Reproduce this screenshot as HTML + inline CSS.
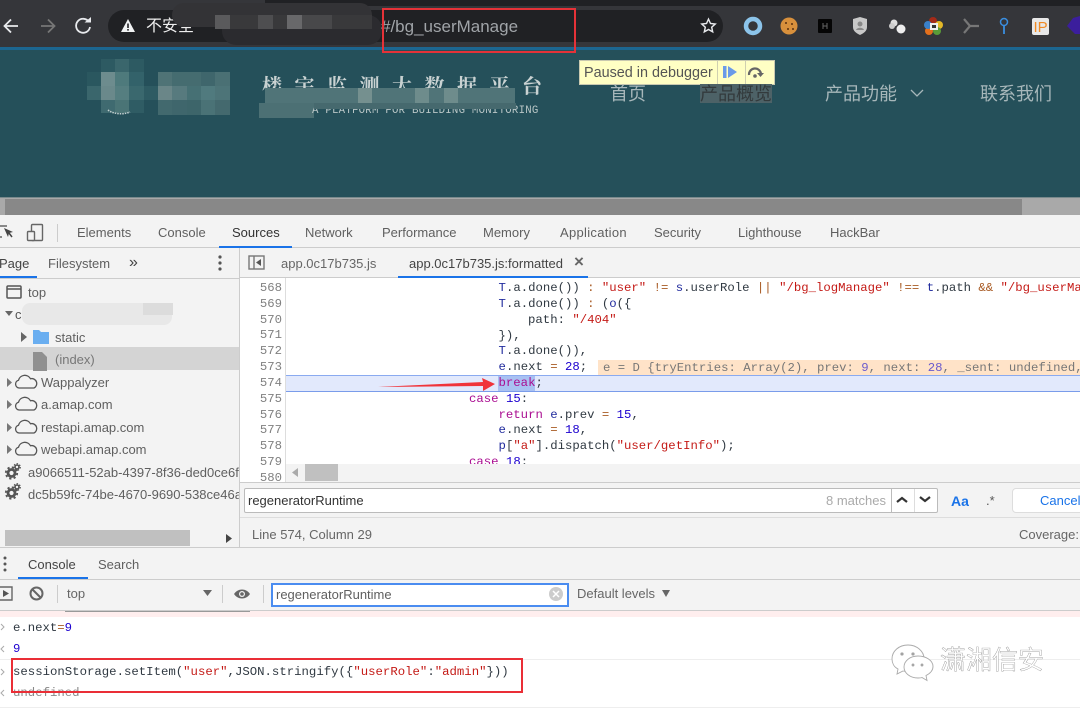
<!DOCTYPE html>
<html><head><meta charset="utf-8"><style>
html,body{margin:0;padding:0;background:#fff}
#r{position:relative;width:1080px;height:708px;overflow:hidden;background:#f3f3f3;font-family:"Liberation Sans","Noto Sans CJK SC",sans-serif;filter:blur(.35px)}
#r div,#r svg,#r span.t{position:absolute}
.t{white-space:nowrap;line-height:18px;font-size:13px;color:#5f5f5f;margin-top:1px}
.m{font-family:"Liberation Mono",monospace;font-size:12.3px;line-height:16px;white-space:pre;color:#303942}
.b{color:#222c9e}.k{color:#aa0d91}.n{color:#1c00cf}.s{color:#c41a16}.o{color:#a85a23}
.g{color:#777}
</style></head><body><div id="r">

<!-- browser chrome -->
<div style="left:0;top:0;width:1080px;height:47px;background:#35363a"></div>
<div style="left:265px;top:0;width:815px;height:6px;background:#202124"></div>
<div style="left:108px;top:10px;width:615px;height:32px;border-radius:16px;background:#202124"></div>
<div style="left:0;top:47px;width:1080px;height:3px;background:#1c6690"></div>
<svg style="left:0;top:14px" width="100" height="24" viewBox="0 0 100 24" fill="none"><path d="M18 12H5M11 5.500L4.500 12L11 18.500" stroke="#e8eaed" stroke-width="1.800"/><path d="M41 12H54M48 5.500L54.500 12L48 18.500" stroke="#777" stroke-width="1.800"/><path d="M89 8A7 7 0 1 0 90 13" stroke="#e8eaed" stroke-width="1.800"/><path d="M84.500 8.500H91V3z" fill="#e8eaed"/></svg>
<svg style="left:120px;top:18px" width="16" height="15" viewBox="0 0 16 15"><path d="M8 1L15 14H1z" fill="#f1f3f4"/><rect x="7.200" y="5.500" width="1.600" height="4.500" fill="#202124"/><rect x="7.200" y="11" width="1.600" height="1.600" fill="#202124"/></svg>
<span class="t" style="left:146px;top:17px;font-size:16px;color:#eee">不安全</span>

<!-- url smudge -->
<div style="left:172px;top:3px;width:200px;height:24px;border-radius:12px;background:#333336"></div>
<div style="left:222px;top:15px;width:160px;height:30px;border-radius:14px;background:#2b2b2f"></div>
<div style="left:215px;top:15px;width:157px;height:14px;background:#39393b"></div>
<div style="left:215px;top:15px;width:15px;height:14px;background:#5a5a5c"></div>
<div style="left:258px;top:15px;width:15px;height:14px;background:#4e4e50"></div>
<div style="left:287px;top:15px;width:15px;height:14px;background:#68686a"></div>
<div style="left:302px;top:15px;width:30px;height:14px;background:#48484a"></div>
<span class="t" style="left:381px;top:16px;font-size:17px;line-height:20px;color:#a0a4a8">#/bg_userManage</span>

<!-- star + extensions -->
<svg style="left:700px;top:17px" width="17" height="17" viewBox="0 0 24 24"><path d="M12 3l2.800 6.200 6.700.7-5 4.500 1.400 6.600L12 17.600 6.100 21l1.400-6.600-5-4.500 6.700-.7z" fill="none" stroke="#e8eaed" stroke-width="2"/></svg>
<svg style="left:742px;top:15px" width="338" height="22" viewBox="0 0 338 22">
<circle cx="11" cy="11" r="7" fill="none" stroke="#8cc4ea" stroke-width="4.500"/>
<circle cx="47" cy="11" r="8.500" fill="#d8903c"/><circle cx="44" cy="8" r="1" fill="#5a3010"/><circle cx="50" cy="9" r="1" fill="#5a3010"/><circle cx="46" cy="14" r="1" fill="#5a3010"/><circle cx="51" cy="14" r="1" fill="#5a3010"/>
<rect x="76" y="4" width="14" height="14" rx="1" fill="#050505"/><path d="M81 8v6M85 8v6M81 11h4" stroke="#666" stroke-width="1"/>
<path d="M118 2l7 2v8c0 4-3 6-7 8-4-2-7-4-7-8V4z" fill="#c8c8c8"/><circle cx="118" cy="9" r="2.500" fill="#888"/><path d="M114 15c1-3 7-3 8 0z" fill="#888"/>
<circle cx="152" cy="8" r="3.500" fill="#ddd"/><circle cx="159" cy="14" r="4.500" fill="#eee"/><circle cx="150" cy="11" r="3" fill="#ccc"/>
<circle cx="191" cy="6" r="4" fill="#a32a18"/><circle cx="197" cy="10" r="4" fill="#e4b828"/><circle cx="195" cy="16" r="4" fill="#5a9c38"/><circle cx="187" cy="16" r="4" fill="#e4701c"/><circle cx="186" cy="10" r="4" fill="#3a80c8"/><rect x="188" y="8" width="8" height="7" fill="#eee"/><rect x="190" y="10" width="4" height="3" fill="#333"/>
<path d="M222 4l6 7-6 7M228 11h9" fill="none" stroke="#777" stroke-width="2.200"/>
<circle cx="262" cy="7" r="3.500" fill="none" stroke="#3a8ee0" stroke-width="1.500"/><path d="M262 11v8" stroke="#3a8ee0" stroke-width="1.800"/>
<rect x="290" y="3" width="17" height="17" rx="2" fill="#e8e8e8"/><text x="291.500" y="17" font-family="Liberation Sans" font-size="15" fill="#f08a24">IP</text>
<path d="M331 3l7-2v18h-5l-8-8z" fill="#3b1e9c"/>
</svg>

<!-- page -->
<div style="left:0;top:50px;width:1080px;height:148px;background:#25505a"></div>
<!-- logo mosaic -->
<svg style="left:86px;top:59px" width="146" height="58" viewBox="86 59 146 58" shape-rendering="crispEdges">
<rect x="101" y="59" width="14" height="13" fill="#2d5a62"/><rect x="115" y="59" width="14" height="13" fill="#3a666c"/><rect x="129" y="59" width="15" height="13" fill="#2d5a62"/>
<rect x="87" y="72" width="14" height="14" fill="#2a575f"/><rect x="101" y="72" width="14" height="14" fill="#6d8c8e"/><rect x="115" y="72" width="14" height="14" fill="#4e7a7c"/><rect x="129" y="72" width="15" height="14" fill="#33626a"/>
<rect x="87" y="86" width="14" height="14" fill="#3a666c"/><rect x="101" y="86" width="14" height="14" fill="#6a898b"/><rect x="115" y="86" width="14" height="14" fill="#557e80"/><rect x="129" y="86" width="15" height="14" fill="#3a686e"/><rect x="144" y="86" width="14" height="14" fill="#2e5b63"/>
<rect x="101" y="100" width="14" height="13" fill="#3f6a70"/><rect x="115" y="100" width="14" height="13" fill="#4a7476"/><rect x="129" y="100" width="15" height="13" fill="#2f5c64"/>
<rect x="158" y="72" width="14" height="14" fill="#4f7376"/><rect x="172" y="72" width="15" height="14" fill="#456c70"/><rect x="187" y="72" width="14" height="14" fill="#456c70"/><rect x="201" y="72" width="14" height="14" fill="#3f666c"/><rect x="215" y="72" width="15" height="14" fill="#4a7074"/>
<rect x="158" y="86" width="14" height="14" fill="#6a8688"/><rect x="172" y="86" width="15" height="14" fill="#577a7e"/><rect x="187" y="86" width="14" height="14" fill="#467074"/><rect x="201" y="86" width="14" height="14" fill="#507a7e"/><rect x="215" y="86" width="15" height="14" fill="#4d7478"/>
<rect x="158" y="100" width="14" height="15" fill="#42696e"/><rect x="172" y="100" width="15" height="15" fill="#3f666c"/><rect x="187" y="100" width="14" height="15" fill="#3d656a"/><rect x="201" y="100" width="14" height="15" fill="#4a7276"/><rect x="215" y="100" width="15" height="15" fill="#44696e"/>
</svg>
<svg style="left:105px;top:108px" width="30" height="8"><path d="M3 2c5 4 15 5 22 2" fill="none" stroke="#c3d0d0" stroke-width="1.500" stroke-dasharray="1.500 1"/></svg>
<span class="t" style="left:262px;top:74px;font:bold 20px/24px 'Liberation Serif','Noto Serif CJK SC',serif;letter-spacing:12.500px;color:#c9d2d2">楼宇监测大数据平台</span>
<div style="left:265px;top:88px;width:250px;height:15px;background:#507478"></div>
<div style="left:358px;top:88px;width:14px;height:15px;background:#75908f"></div>
<div style="left:415px;top:88px;width:14px;height:15px;background:#6e8c8c"></div>
<div style="left:444px;top:88px;width:14px;height:15px;background:#6e8c8c"></div>
<div style="left:259px;top:103px;width:55px;height:15px;background:#4c7074"></div>
<span class="t" style="left:312px;top:103px;font:10.700px/14px 'Liberation Mono',monospace;color:#b9c6c6;letter-spacing:.25px">A PLATFORM FOR BUILDING MONITORING</span>
<div style="left:314px;top:103px;width:202px;height:6px;background:#46696e"></div>

<div style="left:579px;top:60px;width:194px;height:23px;background:#ffffc4;border:1px solid #c9c9b0"></div>
<span class="t" style="left:584px;top:63px;font-size:14.400px;color:#555">Paused in debugger</span>
<div style="left:717px;top:61px;width:1px;height:23px;background:#cfcfb0"></div>
<div style="left:745px;top:61px;width:1px;height:23px;background:#cfcfb0"></div>
<svg style="left:722px;top:64px" width="50" height="16" viewBox="0 0 50 16"><rect x="1" y="2" width="3.500" height="12" fill="#6a9ae8"/><path d="M6 2l9 6-9 6z" fill="#6a9ae8"/><path d="M27 11a6 6 0 0 1 12-1" fill="none" stroke="#666" stroke-width="2.200"/><path d="M35 9h7l-3.500 4z" fill="#666"/><circle cx="33" cy="12" r="1.800" fill="#666"/></svg>

<span class="t" style="left:610px;top:80px;font-size:18px;line-height:26px;color:#a7b7ba">首页</span>
<div style="left:700px;top:84px;width:72px;height:19px;background:#4d6267"></div>
<span class="t" style="left:700px;top:80px;font-size:18px;line-height:26px;color:#333a3c">产品概览</span>
<span class="t" style="left:825px;top:80px;font-size:18px;line-height:26px;color:#a7b7ba">产品功能</span>
<svg style="left:909px;top:87px" width="16" height="12" viewBox="0 0 16 12"><path d="M2 3l6 6 6-6" fill="none" stroke="#a7b7ba" stroke-width="1.300"/></svg>
<span class="t" style="left:980px;top:80px;font-size:18px;line-height:26px;color:#a7b7ba">联系我们</span>

<!-- red url box -->
<div style="left:382px;top:8px;width:190px;height:41px;border:2px solid #e53238"></div>

<div style="left:0;top:197px;width:1080px;height:1px;background:#78898c"></div>
<div style="left:0;top:198px;width:1080px;height:17px;background:#a9a9a9"></div>
<div style="left:5px;top:199px;width:1017px;height:16px;background:#888"></div>

<!-- devtools top tabs -->
<div style="left:0;top:215px;width:1080px;height:333px;background:#f3f3f3"></div>
<div style="left:0;top:247px;width:1080px;height:1px;background:#ccc"></div>
<svg style="left:0;top:222px" width="46" height="22" viewBox="0 0 46 22" fill="none"><path d="M0 4h7M0 15h2" stroke="#666" stroke-width="1.500"/><path d="M4 6l9 4-4 1-1 4z" fill="#444"/><path d="M9 11l3 4" stroke="#444" stroke-width="1.500"/><rect x="31.500" y="2.500" width="11" height="16" rx="1" stroke="#666" stroke-width="1.400"/><rect x="27.500" y="9.500" width="7" height="9" rx="1" fill="#f3f3f3" stroke="#666" stroke-width="1.400"/></svg>
<div style="left:57px;top:224px;width:1px;height:18px;background:#ccc"></div>
<span class="t" style="left:77px;top:223px">Elements</span>
<span class="t" style="left:158px;top:223px">Console</span>
<span class="t" style="left:232px;top:223px;color:#333">Sources</span>
<span class="t" style="left:305px;top:223px">Network</span>
<span class="t" style="left:382px;top:223px">Performance</span>
<span class="t" style="left:483px;top:223px">Memory</span>
<span class="t" style="left:560px;top:223px;letter-spacing:.3px">Application</span>
<span class="t" style="left:654px;top:223px">Security</span>
<span class="t" style="left:738px;top:223px">Lighthouse</span>
<span class="t" style="left:830px;top:223px">HackBar</span>
<div style="left:219px;top:246px;width:73px;height:2px;background:#1a73e8"></div>

<!-- left panel -->
<div style="left:239px;top:248px;width:1px;height:300px;background:#ccc"></div>
<div style="left:0;top:278px;width:239px;height:1px;background:#ccc"></div>
<span class="t" style="left:-1px;top:254px;color:#444">Page</span>
<span class="t" style="left:48px;top:254px">Filesystem</span>
<span class="t" style="left:129px;top:253px;font-size:16px;color:#444">»</span>
<div style="left:0;top:276px;width:37px;height:2px;background:#1a73e8"></div>
<svg style="left:217px;top:254px" width="6" height="18"><circle cx="3" cy="3" r="1.600" fill="#555"/><circle cx="3" cy="9" r="1.600" fill="#555"/><circle cx="3" cy="15" r="1.600" fill="#555"/></svg>
<div style="left:0;top:347px;width:239px;height:23px;background:#d4d4d4"></div>
<svg style="left:0;top:284px" width="60" height="90" viewBox="0 0 60 90" fill="none">
<rect x="7" y="2" width="14" height="12" rx="1" stroke="#555" stroke-width="1.500"/><path d="M7 5h14" stroke="#555" stroke-width="1.500"/>
<path d="M5 27h8l-4 5z" fill="#666"/><path d="M21 48v10l6-5z" fill="#666"/>
<path d="M33 46h6l2 2h8v12H33z" fill="#6aaef0"/>
<path d="M33 68h9l5 5v14H33z" fill="#909090"/>
</svg>
<svg style="left:0;top:360px" width="40" height="146" viewBox="0 0 40 146" fill="none" stroke="#555" stroke-width="1.300">
<g><path d="M7 18v9l5-4.500z" fill="#777" stroke="none"/><path d="M21 28h-2a4 4 0 0 1-.5-7.800 6.500 6.500 0 0 1 12-1.500 5 5 0 0 1 3.500 9.300z"/></g>
<g transform="translate(0 22)"><path d="M7 18v9l5-4.500z" fill="#777" stroke="none"/><path d="M21 28h-2a4 4 0 0 1-.5-7.800 6.500 6.500 0 0 1 12-1.500 5 5 0 0 1 3.500 9.300z"/></g>
<g transform="translate(0 45)"><path d="M7 18v9l5-4.500z" fill="#777" stroke="none"/><path d="M21 28h-2a4 4 0 0 1-.5-7.800 6.500 6.500 0 0 1 12-1.500 5 5 0 0 1 3.500 9.300z"/></g>
<g transform="translate(0 67)"><path d="M7 18v9l5-4.500z" fill="#777" stroke="none"/><path d="M21 28h-2a4 4 0 0 1-.5-7.800 6.500 6.500 0 0 1 12-1.500 5 5 0 0 1 3.500 9.300z"/></g>
<g stroke="#555">
<circle cx="11.500" cy="113" r="3.500" stroke-width="2.800"/><circle cx="11.500" cy="113" r="5.700" stroke-width="1.800" stroke-dasharray="2.200 2.300"/><circle cx="17" cy="107" r="2" stroke-width="1.600"/><circle cx="17" cy="107" r="3.300" stroke-width="1.200" stroke-dasharray="1.500 1.500"/>
<circle cx="11.500" cy="133" r="3.500" stroke-width="2.800"/><circle cx="11.500" cy="133" r="5.700" stroke-width="1.800" stroke-dasharray="2.200 2.300"/><circle cx="17" cy="127" r="2" stroke-width="1.600"/><circle cx="17" cy="127" r="3.300" stroke-width="1.200" stroke-dasharray="1.500 1.500"/>
</g>
</svg>
<span class="t" style="left:28px;top:283px">top</span>
<div style="left:22px;top:303px;width:150px;height:22px;background:#e8e8e8;border-radius:8px"></div>
<span class="t" style="left:15px;top:305px;color:#555">c</span>
<div style="left:143px;top:303px;width:30px;height:12px;background:#dcdcdc"></div>
<span class="t" style="left:55px;top:328px">static</span>
<span class="t" style="left:55px;top:350px;color:#777">(index)</span>
<span class="t" style="left:41px;top:373px">Wappalyzer</span>
<span class="t" style="left:41px;top:395px">a.amap.com</span>
<span class="t" style="left:41px;top:418px">restapi.amap.com</span>
<span class="t" style="left:41px;top:440px">webapi.amap.com</span>
<div style="left:28px;top:463px;width:211px;height:42px;overflow:hidden"><span class="t" style="left:0;top:0">a9066511-52ab-4397-8f36-ded0ce6f5c21</span><span class="t" style="left:0;top:22px">dc5b59fc-74be-4670-9690-538ce46a0f31</span></div>
<div style="left:5px;top:530px;width:185px;height:16px;background:#c0c0c0"></div>
<svg style="left:225px;top:533px" width="8" height="11"><path d="M1 1l6 4.500L1 10z" fill="#444"/></svg>

<!-- source tabs -->
<div style="left:240px;top:277px;width:840px;height:1px;background:#ccc"></div>
<svg style="left:248px;top:254px" width="18" height="17" fill="none"><rect x="1" y="2" width="15" height="13" stroke="#777" stroke-width="1.400"/><path d="M6 2v13" stroke="#777" stroke-width="1.400"/><path d="M13 5v7l-5-3.500z" fill="#555"/></svg>
<span class="t" style="left:281px;top:254px;color:#666">app.0c17b735.js</span>
<span class="t" style="left:409px;top:254px;color:#444">app.0c17b735.js:formatted</span>
<span class="t" style="left:574px;top:252px;font-size:17px;font-weight:bold;color:#666">×</span>
<div style="left:398px;top:276px;width:190px;height:2px;background:#1a73e8"></div>

<!-- code area -->
<div style="left:240px;top:278px;width:840px;height:204px;background:#fff;overflow:hidden">
 <div style="left:45px;top:0;width:1px;height:204px;background:#ddd"></div>
 <div style="left:46px;top:97px;width:794px;height:17px;background:#e2e9fc;border-top:1px solid #8aaaf0;border-bottom:1px solid #7a9cea;box-sizing:border-box"></div>
 <div style="left:358px;top:82px;width:482px;height:15px;background:#ffe3c8"></div>
 <div style="left:258px;top:98px;width:37px;height:15px;background:#a9c1f2"></div>
 <div class="m" style="left:0;top:3px;width:42px;text-align:right;color:#808080;line-height:15.830px">568
569
570
571
572
573
574
575
576
577
578
579
580</div>
 <div class="m" style="left:199.500px;top:-12.800px;line-height:15.830px">        }),
        <span class="b">T</span>.a.done()) <span class="o">:</span> <span class="s">"user"</span> <span class="o">!=</span> <span class="b">s</span>.userRole <span class="o">||</span> <span class="s">"/bg_logManage"</span> <span class="o">!==</span> <span class="b">t</span>.path <span class="o">&amp;&amp;</span> <span class="s">"/bg_userManage"</span>
        <span class="b">T</span>.a.done()) <span class="o">:</span> (<span class="b">o</span>({
            path: <span class="s">"/404"</span>
        }),
        <span class="b">T</span>.a.done()),
        <span class="b">e</span>.next <span class="o">=</span> <span class="n">28</span>;
        <span class="k">break</span>;
    <span class="k">case</span> <span class="n">15</span>:
        <span class="k">return</span> <span class="b">e</span>.prev <span class="o">=</span> <span class="n">15</span>,
        <span class="b">e</span>.next <span class="o">=</span> <span class="n">18</span>,
        <span class="b">p</span>[<span class="s">"a"</span>].dispatch(<span class="s">"user/getInfo"</span>);
    <span class="k">case</span> <span class="n">18</span>:</div>
 <div class="m g" style="left:363px;top:81.500px;color:#777">e = D {tryEntries: Array(2), prev: <span style="color:#6a5acd">9</span>, next: <span style="color:#6a5acd">28</span>, _sent: undefined, …}</div>
 <div style="left:46px;top:186px;width:794px;height:18px;background:#f3f3f3"></div>
 <div style="left:65px;top:186px;width:33px;height:17px;background:#c0c0c0"></div>
 <svg style="left:51px;top:190px" width="8" height="10"><path d="M7 0v9L1 4.500z" fill="#aaa"/></svg>
</div>

<!-- arrow -->
<svg style="left:370px;top:370px" width="135" height="25"><path d="M8 17L113 12 112 8 125 14 113 21 113 16z" fill="#f0343a"/></svg>

<!-- search bar -->
<div style="left:240px;top:482px;width:840px;height:1px;background:#ccc"></div>
<div style="left:244px;top:488px;width:692px;height:23px;background:#fff;border:1px solid #bbb;border-radius:2px"></div>
<span class="t" style="left:248px;top:491px;color:#333">regeneratorRuntime</span>
<span class="t" style="left:826px;top:491px;color:#aaa">8 matches</span>
<div style="left:891px;top:489px;width:1px;height:23px;background:#bbb"></div>
<div style="left:914px;top:489px;width:1px;height:23px;background:#ddd"></div>
<svg style="left:896px;top:495px" width="40" height="10" fill="none" stroke="#333" stroke-width="2.200"><path d="M1 7l5-4 5 4M24 2l5 4 5-4"/></svg>
<span class="t" style="left:951px;top:491px;font-size:14px;font-weight:bold;color:#1a73e8">Aa</span>
<span class="t" style="left:986px;top:491px;color:#555">.*</span>
<div style="left:1012px;top:488px;width:90px;height:23px;background:#fff;border:1px solid #ddd;border-radius:4px"></div>
<span class="t" style="left:1040px;top:491px;color:#1a73e8">Cancel</span>
<div style="left:240px;top:517px;width:840px;height:1px;background:#ddd"></div>
<span class="t" style="left:252px;top:525px;color:#666">Line 574, Column 29</span>
<span class="t" style="left:1019px;top:525px;color:#666">Coverage:</span>
<div style="left:0;top:547px;width:1080px;height:1px;background:#ccc"></div>

<!-- drawer -->
<svg style="left:2px;top:556px" width="6" height="16"><circle cx="3" cy="2" r="1.500" fill="#555"/><circle cx="3" cy="8" r="1.500" fill="#555"/><circle cx="3" cy="14" r="1.500" fill="#555"/></svg>
<span class="t" style="left:28px;top:555px;color:#444">Console</span>
<span class="t" style="left:98px;top:555px">Search</span>
<div style="left:18px;top:577px;width:70px;height:2px;background:#1a73e8"></div>
<div style="left:0;top:579px;width:1080px;height:1px;background:#ccc"></div>
<svg style="left:0;top:585px" width="260" height="18" fill="none"><path d="M0 2h12v13H0" stroke="#666" stroke-width="1.400"/><path d="M3 5l6 3.500L3 12z" fill="#555"/><circle cx="36.500" cy="8.500" r="6" stroke="#666" stroke-width="2"/><path d="M32 4l9 9" stroke="#666" stroke-width="2"/><path d="M203 5h9l-4.500 6z" fill="#666"/><path d="M234 9c4-6 12-6 16 0-4 6-12 6-16 0z" fill="#666"/><circle cx="242" cy="9" r="3" fill="#f3f3f3"/><circle cx="242" cy="9" r="1.800" fill="#666"/></svg>
<div style="left:57px;top:585px;width:1px;height:18px;background:#ccc"></div>
<div style="left:222px;top:585px;width:1px;height:18px;background:#ccc"></div>
<div style="left:263px;top:585px;width:1px;height:18px;background:#ccc"></div>
<span class="t" style="left:67px;top:584px;color:#666">top</span>
<div style="left:271px;top:583px;width:294px;height:20px;background:#fff;border:2px solid #4a8cf0"></div>
<span class="t" style="left:276px;top:585px">regeneratorRuntime</span>
<svg style="left:548px;top:586px" width="16" height="16"><circle cx="8" cy="8" r="7" fill="#ccc"/><path d="M5 5l6 6M11 5l-6 6" stroke="#fff" stroke-width="1.500"/></svg>
<span class="t" style="left:577px;top:584px;color:#666">Default levels</span>
<svg style="left:661px;top:589px" width="10" height="9"><path d="M1 1h8L5 8z" fill="#666"/></svg>
<div style="left:0;top:610px;width:1080px;height:1px;background:#ccc"></div>

<!-- console body -->
<div style="left:0;top:611px;width:1080px;height:97px;background:#fff"></div>
<div style="left:0;top:611px;width:1080px;height:6px;background:#ffeeee"></div>
<div style="left:65px;top:611px;width:185px;height:1px;background:#999"></div>
<div style="left:0;top:659px;width:1080px;height:1px;background:#eee"></div>
<div style="left:0;top:707px;width:1080px;height:1px;background:#eee"></div>
<svg style="left:0;top:622px" width="8" height="80" fill="none" stroke="#aaa" stroke-width="1"><path d="M1 2l3 3-3 3M4 24l-3 3 3 3M1 47l3 3-3 3M4 68l-3 3 3 3"/></svg>
<span class="m" style="position:absolute;left:13px;top:620px">e.next<span class="o">=</span><span class="n">9</span></span>
<span class="m n" style="position:absolute;left:13px;top:641px;color:#1c00cf">9</span>
<span class="m" style="position:absolute;left:13px;top:664px;font-size:12.330px">sessionStorage.setItem(<span class="s">"user"</span>,JSON.stringify({<span class="s">"userRole"</span>:<span class="s">"admin"</span>}))</span>
<span class="m" style="position:absolute;left:13px;top:685px;color:#888;font-size:12.330px">undefined</span>
<div style="left:11px;top:658px;width:508px;height:31px;border:2px solid #ea2e36"></div>

<!-- watermark -->
<svg style="left:890px;top:642px" width="48" height="40" viewBox="0 0 48 40" fill="#fff" stroke="#aaa" stroke-width=".9"><path d="M18 3C9 3 2 9 2 17c0 4 2 8 6 10l-1 5 6-3c2 .5 3 .5 5 .5 9 0 16-6 16-13S27 3 18 3z"/><path d="M28 14c-8 0-14 5-14 11s6 11 14 11c2 0 3 0 4-.5l5 3-1-5c4-2 7-5 7-9 0-6-7-10.500-15-10.500z"/><circle cx="12" cy="12" r="1.200" fill="#999"/><circle cx="23" cy="12" r="1.200" fill="#999"/><circle cx="23" cy="23" r="1" fill="#999"/><circle cx="32" cy="23" r="1" fill="#999"/></svg>
<span class="t" style="left:940px;top:644px;font-size:26px;line-height:30px;color:#fff;-webkit-text-stroke:.35px #888">潇湘信安</span>

</div></body></html>
